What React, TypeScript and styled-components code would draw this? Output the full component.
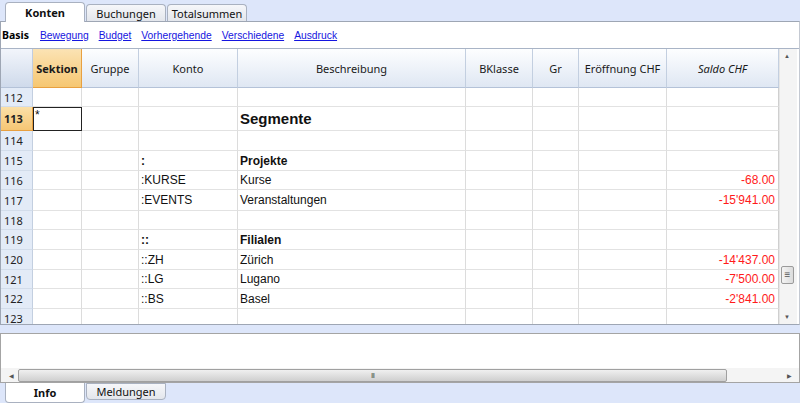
import React from "react";
import styled, { createGlobalStyle } from "styled-components";

const GlobalStyle = createGlobalStyle`
  html, body { margin: 0; padding: 0; }
  body { font-family: "Liberation Sans", Arial, sans-serif; background: #dde6fa; }
`;

const COLS = "32px 49px 57px 99px 228px 67px 46px 88px 112px";

type Row = {
  n: number;
  h: number;
  konto?: string;
  text?: string;
  saldo?: string;
  kind?: "title" | "group";
  active?: boolean;
};

const rows: Row[] = [
  { n: 112, h: 19 },
  { n: 113, h: 24, text: "Segmente", kind: "title", active: true },
  { n: 114, h: 20 },
  { n: 115, h: 20, konto: ":", text: "Projekte", kind: "group" },
  { n: 116, h: 19, konto: ":KURSE", text: "Kurse", saldo: "-68.00" },
  { n: 117, h: 21, konto: ":EVENTS", text: "Veranstaltungen", saldo: "-15'941.00" },
  { n: 118, h: 19 },
  { n: 119, h: 20, konto: "::", text: "Filialen", kind: "group" },
  { n: 120, h: 20, konto: "::ZH", text: "Zürich", saldo: "-14'437.00" },
  { n: 121, h: 19, konto: "::LG", text: "Lugano", saldo: "-7'500.00" },
  { n: 122, h: 20, konto: "::BS", text: "Basel", saldo: "-2'841.00" },
  { n: 123, h: 20 },
];

const headers = [
  { label: "Sektion", sel: true },
  { label: "Gruppe" },
  { label: "Konto" },
  { label: "Beschreibung" },
  { label: "BKlasse" },
  { label: "Gr" },
  { label: "Eröffnung CHF" },
  { label: "Saldo CHF", italic: true },
];

export default function App() {
  return (
    <>
      <GlobalStyle />
      <Page>
        <TabBar>
          <Tab $active>Konten</Tab>
          <Tab>Buchungen</Tab>
          <Tab>Totalsummen</Tab>
        </TabBar>

        <MainPanel>
          <Toolbar>
            <b>Basis</b>
            <a>Bewegung</a>
            <a>Budget</a>
            <a>Vorhergehende</a>
            <a>Verschiedene</a>
            <a>Ausdruck</a>
          </Toolbar>

          <GridArea>
            <Grid>
              <HeaderRow>
                <Corner />
                {headers.map((h) => (
                  <HeadCell key={h.label} $sel={h.sel} $italic={h.italic}>
                    {h.label}
                  </HeadCell>
                ))}
              </HeaderRow>
              {rows.map((r) => (
                <DataRow key={r.n} $h={r.h}>
                  <RowNum $active={r.active}>{r.n}</RowNum>
                  <Cell $selected={r.active}>{r.active ? "*" : ""}</Cell>
                  <Cell />
                  <Cell $bold={r.kind === "group"}>{r.konto}</Cell>
                  <Cell $kind={r.kind}>{r.text}</Cell>
                  <Cell />
                  <Cell />
                  <Cell />
                  <Amount>{r.saldo}</Amount>
                </DataRow>
              ))}
            </Grid>
            <VScroll>
              <Arrow>▲</Arrow>
              <VTrack>
                <VThumb>≡</VThumb>
              </VTrack>
              <Arrow>▼</Arrow>
            </VScroll>
          </GridArea>
        </MainPanel>

        <InfoPanel>
          <InfoBody />
          <HScroll>
            <Arrow>◀</Arrow>
            <HThumb>
              <span>III</span>
            </HThumb>
            <HRest />
            <Arrow>▶</Arrow>
          </HScroll>
        </InfoPanel>

        <BottomTabs>
          <BottomTab $active>Info</BottomTab>
          <BottomTab>Meldungen</BottomTab>
        </BottomTabs>
      </Page>
    </>
  );
}

const Page = styled.div`
  width: 800px;
  height: 403px;
  display: flex;
  flex-direction: column;
  background: #dde6fa;
  overflow: hidden;
`;

const TabBar = styled.div`
  display: flex;
  align-items: flex-end;
  height: 21px;
  padding-left: 5px;
  gap: 1px;
`;

const Tab = styled.div<{ $active?: boolean }>`
  width: 80px;
  height: ${(p) => (p.$active ? "20px" : "17px")};
  box-sizing: border-box;
  border: 1px solid #a9b1c0;
  border-bottom: none;
  border-radius: 4px 4px 0 0;
  background: ${(p) =>
    p.$active ? "#fff" : "linear-gradient(#f6f7fa, #e3e6ec)"};
  font-family: "Noto Sans", "DejaVu Sans", sans-serif;
  font-size: 11px;
  font-weight: ${(p) => (p.$active ? 700 : 400)};
  color: #111;
  display: flex;
  align-items: center;
  justify-content: center;
  margin-bottom: ${(p) => (p.$active ? "-1px" : "0")};
  position: relative;
`;

const MainPanel = styled.div`
  height: 304px;
  background: #fff;
  border: 1px solid #9ea6b4;
  border-right-color: #c4c9d2;
  box-sizing: border-box;
  display: flex;
  flex-direction: column;
`;

const Toolbar = styled.div`
  height: 26px;
  display: flex;
  align-items: center;
  gap: 10px;
  padding-left: 1px;
  font-family: "Liberation Sans", Arial, sans-serif;
  font-size: 10.3px;

  b {
    font-family: "Noto Sans", "DejaVu Sans", sans-serif;
    font-size: 10.5px;
    font-weight: 700;
    color: #000;
    margin-right: 1px;
  }
  a {
    color: #1515e0;
    text-decoration: underline;
  }
`;

const GridArea = styled.div`
  flex: 1;
  display: flex;
  overflow: hidden;
  border-top: 1px solid #a9b4c6;
`;

const Grid = styled.div`
  width: 778px;
  overflow: hidden;
`;

const HeaderRow = styled.div`
  display: grid;
  grid-template-columns: ${COLS};
  height: 39px;
`;

const Corner = styled.div`
  background: linear-gradient(#f2f5fb, #cfdaeb);
  border-right: 1px solid #c1cde0;
  border-bottom: 1px solid #b4c2d8;
`;

const HeadCell = styled.div<{ $sel?: boolean; $italic?: boolean }>`
  display: flex;
  align-items: center;
  justify-content: center;
  font-family: "Noto Sans", "DejaVu Sans", sans-serif;
  font-size: 11px;
  color: #1a1a1a;
  font-weight: ${(p) => (p.$sel ? 700 : 400)};
  font-style: ${(p) => (p.$italic ? "italic" : "normal")};
  background: ${(p) =>
    p.$sel
      ? "linear-gradient(#fbe3b4, #f6c772)"
      : "linear-gradient(#fdfeff, #dfe7f3)"};
  border-right: 1px solid ${(p) => (p.$sel ? "#e8a040" : "#c3cfe0")};
  border-bottom: 1px solid ${(p) => (p.$sel ? "#e8a040" : "#b4c2d8")};
  box-sizing: border-box;
`;

const DataRow = styled.div<{ $h: number }>`
  display: grid;
  grid-template-columns: ${COLS};
  height: ${(p) => p.$h}px;
`;

const RowNum = styled.div<{ $active?: boolean }>`
  display: flex;
  align-items: center;
  padding-left: 3px;
  font-family: "Noto Sans", "DejaVu Sans", sans-serif;
  font-size: 11px;
  color: #222;
  font-weight: ${(p) => (p.$active ? 700 : 400)};
  background: ${(p) =>
    p.$active ? "linear-gradient(#fbe0a8, #f6c674)" : "#e3ebf7"};
  border-right: 1px solid ${(p) => (p.$active ? "#e8a040" : "#c3cfe0")};
  border-bottom: 1px solid ${(p) => (p.$active ? "#e8a040" : "#d2dcea")};
`;

const Cell = styled.div<{
  $selected?: boolean;
  $bold?: boolean;
  $kind?: "title" | "group";
}>`
  display: flex;
  align-items: ${(p) => (p.$selected ? "flex-start" : "center")};
  padding: ${(p) => (p.$selected ? "1px 2px" : "0 2px")};
  font-size: ${(p) => (p.$kind === "title" ? "15px" : "12px")};
  font-weight: ${(p) => (p.$kind || p.$bold ? 700 : 400)};
  color: #111;
  border-right: 1px solid #dcdcdc;
  border-bottom: 1px solid #e2e2e2;
  box-sizing: border-box;
  outline: ${(p) => (p.$selected ? "1px solid #222" : "none")};
  outline-offset: -1px;
  white-space: nowrap;
`;

const Amount = styled.div`
  display: flex;
  align-items: center;
  justify-content: flex-end;
  padding-right: 3px;
  font-size: 12px;
  color: #ff1a1a;
  border-bottom: 1px solid #e2e2e2;
  border-right: 1px solid #cfcfcf;
  box-sizing: border-box;
`;

const VScroll = styled.div`
  width: 17px;
  display: flex;
  flex-direction: column;
  background: #f4f4f4;
  border-left: 1px solid #e6e6e6;
`;

const Arrow = styled.div`
  width: 14px;
  height: 14px;
  display: flex;
  align-items: center;
  justify-content: center;
  font-size: 6px;
  color: #555;
  flex-shrink: 0;
`;

const VTrack = styled.div`
  flex: 1;
  position: relative;
`;

const VThumb = styled.div`
  position: absolute;
  left: 1px;
  top: 203px;
  width: 13px;
  height: 18px;
  box-sizing: border-box;
  border: 1px solid #9b9b9b;
  border-radius: 2px;
  background: linear-gradient(90deg, #f4f4f4, #dcdcdc);
  font-size: 10px;
  line-height: 16px;
  text-align: center;
  color: #555;
`;

const InfoPanel = styled.div`
  margin-top: 8px;
  height: 50px;
  background: #fff;
  border: 1px solid #a4a4a4;
  box-sizing: border-box;
  display: flex;
  flex-direction: column;
`;

const InfoBody = styled.div`
  flex: 1;
`;

const HScroll = styled.div`
  height: 14px;
  display: flex;
  align-items: center;
  background: #f4f4f4;
  padding: 0 3px;
`;

const HThumb = styled.div`
  width: 709px;
  height: 13px;
  box-sizing: border-box;
  border: 1px solid #a0a0a0;
  border-radius: 2px;
  background: linear-gradient(#f0f0f0, #cfcfcf);
  display: flex;
  align-items: center;
  justify-content: center;

  span {
    font-size: 7px;
    color: #555;
    letter-spacing: -1px;
  }
`;

const HRest = styled.div`
  flex: 1;
`;

const BottomTabs = styled.div`
  display: flex;
  padding-left: 5px;
  gap: 1px;
  height: 20px;
`;

const BottomTab = styled.div<{ $active?: boolean }>`
  width: 80px;
  height: ${(p) => (p.$active ? "20px" : "17px")};
  box-sizing: border-box;
  border: 1px solid #a9b1c0;
  border-top: ${(p) => (p.$active ? "none" : "1px solid #a9b1c0")};
  border-radius: 0 0 4px 4px;
  background: ${(p) =>
    p.$active ? "#fff" : "linear-gradient(#f6f7fa, #e3e6ec)"};
  font-family: "Noto Sans", "DejaVu Sans", sans-serif;
  font-size: 11px;
  font-weight: ${(p) => (p.$active ? 700 : 400)};
  color: #111;
  display: flex;
  align-items: center;
  justify-content: center;
`;
